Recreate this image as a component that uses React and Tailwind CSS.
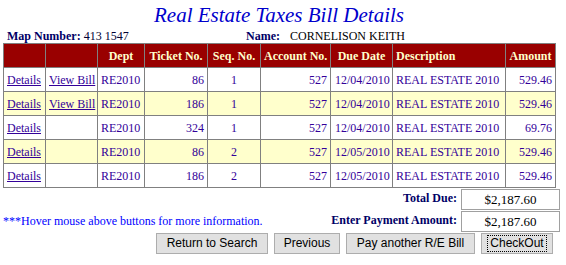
const rows = [
  { bill: true, ticket: '86', seq: '1', due: '12/04/2010', amount: '529.46' },
  { bill: true, ticket: '186', seq: '1', due: '12/04/2010', amount: '529.46' },
  { bill: false, ticket: '324', seq: '1', due: '12/04/2010', amount: '69.76' },
  { bill: false, ticket: '86', seq: '2', due: '12/05/2010', amount: '529.46' },
  { bill: false, ticket: '186', seq: '2', due: '12/05/2010', amount: '529.46' },
]

const th = 'border border-[#808080] px-[3px] font-bold text-[#ffffcc] text-center whitespace-nowrap'
const td = 'border border-[#808080] px-[3px] whitespace-nowrap'

function Btn({ children, focus, w }) {
  return (
    <button className={w + " flex h-[21px] items-center justify-center border border-[#adadad] bg-[#e1e1e1] text-[12px] text-black font-['Liberation_Sans',Arial,sans-serif]"}>
      <span className={focus ? 'block px-[2px] leading-[15px] outline outline-1 outline-dotted outline-black' : 'block leading-[15px]'}>
        {children}
      </span>
    </button>
  )
}

export default function App() {
  return (
    <div className="w-[566px] h-[265px] bg-white pl-[3px] font-['Liberation_Serif','Times_New_Roman',serif] text-[12px]">
      <div className="w-[552px]">
        <h1 className="h-[29px] pt-[3px] text-center text-[21px] leading-[24px] italic text-[#0000cc]">
          Real Estate Taxes Bill Details
        </h1>
        <div className="flex h-[14px] items-center leading-[14px]">
          <div className="w-[243px] pl-[4px] text-[#000066]">
            <span className="font-bold">Map Number:</span> <span className="text-[#000033]">413 1547</span>
          </div>
          <div className="text-[#000066]">
            <span className="font-bold">Name:</span>
            <span className="ml-[10px] text-black">CORNELISON KEITH</span>
          </div>
        </div>
      </div>

      <table className="w-[552px] table-fixed border-collapse text-[#330099] leading-[14px]">
        <colgroup>
          <col className="w-[42px]" />
          <col className="w-[52px]" />
          <col className="w-[47px]" />
          <col className="w-[63px]" />
          <col className="w-[53px]" />
          <col className="w-[70px]" />
          <col className="w-[62px]" />
          <col className="w-[113px]" />
          <col className="w-[50px]" />
        </colgroup>
        <thead>
          <tr className="h-[24px] bg-[#990000]">
            <th className={th}></th>
            <th className={th}></th>
            <th className={th}>Dept</th>
            <th className={th}>Ticket No.</th>
            <th className={th}>Seq. No.</th>
            <th className={th}>Account No.</th>
            <th className={th}>Due Date</th>
            <th className={th + ' !text-left'}>Description</th>
            <th className={th}>Amount</th>
          </tr>
        </thead>
        <tbody>
          {rows.map((r, i) => (
            <tr key={i} className={i % 2 === 1 ? 'h-[24px] bg-[#ffffcc]' : 'h-[24px] bg-white'}>
              <td className={td}><a className="underline">Details</a></td>
              <td className={td}>{r.bill && <a className="underline">View Bill</a>}</td>
              <td className={td}>RE2010</td>
              <td className={td + ' text-right'}>{r.ticket}</td>
              <td className={td + ' text-center'}>{r.seq}</td>
              <td className={td + ' text-right'}>527</td>
              <td className={td + ' pl-[4px]'}>{r.due}</td>
              <td className={td}>REAL ESTATE 2010</td>
              <td className={td + ' text-right'}>{r.amount}</td>
            </tr>
          ))}
        </tbody>
      </table>

      <div className="mt-[1px] flex w-[557px]">
        <div className="flex-1 pt-[25px] leading-[14px] text-[#0000ff]">
          ***Hover mouse above buttons for more information.
        </div>
        <div className="grid grid-cols-[auto_99px] gap-x-[4px] gap-y-[1px] font-bold text-[#000066]">
          <div className="h-[21px] text-right leading-[18px]">Total Due:</div>
          <div className="flex h-[21px] items-center justify-center border border-[#a0a0a0] text-[13px] font-normal text-black">$2,187.60</div>
          <div className="h-[21px] text-right leading-[18px]">Enter Payment Amount:</div>
          <div className="flex h-[21px] items-center justify-center border border-[#a0a0a0] text-[13px] font-normal text-black">$2,187.60</div>
        </div>
      </div>

      <div className="mt-[1px] flex w-[550px] justify-end gap-[6px]">
        <Btn w="w-[112px]">Return to Search</Btn>
        <Btn w="w-[66px]">Previous</Btn>
        <Btn w="w-[129px]">Pay another R/E Bill</Btn>
        <Btn w="w-[72px]" focus>CheckOut</Btn>
      </div>
    </div>
  )
}
